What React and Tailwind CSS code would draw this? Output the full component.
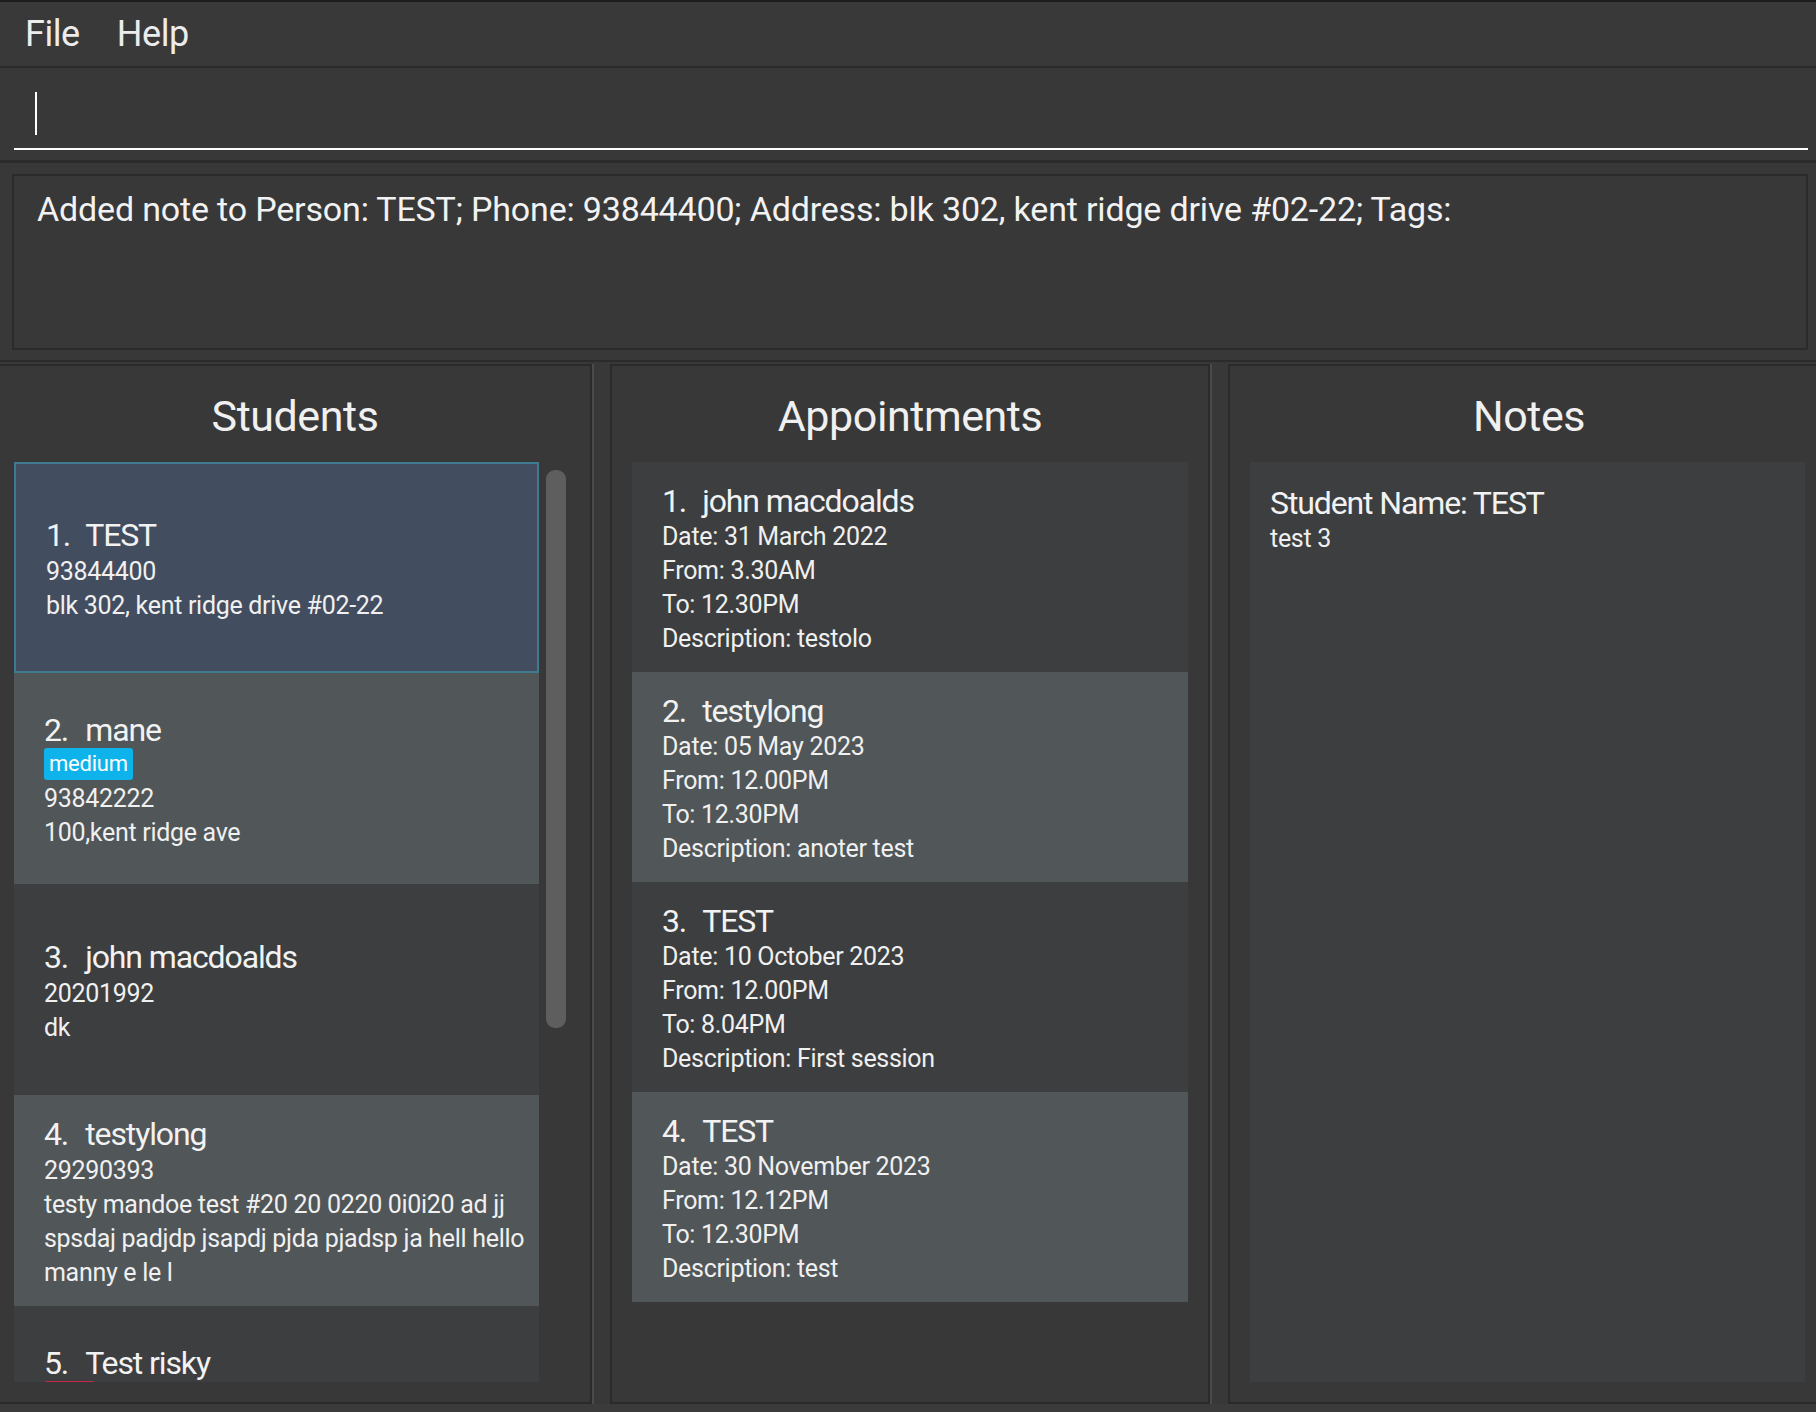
import React from "react";

const students = [
  { n: "1.", name: "TEST", phone: "93844400", addr: ["blk 302, kent ridge drive #02-22"], selected: true },
  { n: "2.", name: "mane", tag: { text: "medium", color: "bg-[#0db3ea]" }, phone: "93842222", addr: ["100,kent ridge ave"] },
  { n: "3.", name: "john macdoalds", phone: "20201992", addr: ["dk"] },
  {
    n: "4.",
    name: "testylong",
    phone: "29290393",
    addr: [
      "testy mandoe test #20 20 0220 0i0i20 ad jj",
      "spsdaj padjdp jsapdj pjda pjadsp ja hell hello",
      "manny e le l",
    ],
  },
  { n: "5.", name: "Test risky", tag: { text: "high", color: "bg-[#c8264a]" }, phone: "91234567", addr: ["risky road"] },
];

const appts = [
  { n: "1.", name: "john macdoalds", date: "31 March 2022", from: "3.30AM", to: "12.30PM", desc: "testolo" },
  { n: "2.", name: "testylong", date: "05 May 2023", from: "12.00PM", to: "12.30PM", desc: "anoter test" },
  { n: "3.", name: "TEST", date: "10 October 2023", from: "12.00PM", to: "8.04PM", desc: "First session" },
  { n: "4.", name: "TEST", date: "30 November 2023", from: "12.12PM", to: "12.30PM", desc: "test" },
];

const small = "text-[25px] leading-[34px] tracking-[-0.012em] text-[#f0f0f0] whitespace-nowrap";
const big = "text-[32px] tracking-[-0.035em] text-[#f2f2f2] whitespace-nowrap";

function StudentCard({ s, i }) {
  const bg = s.selected
    ? "bg-[#424d5f] border-2 border-[#3e7b91] pl-[30px]"
    : i % 2 === 1
    ? "bg-[#515658] pl-[30px]"
    : "bg-[#3c3e3f] pl-[30px]";
  return (
    <div className={`h-[211px] shrink-0 flex flex-col justify-center pt-[2px] ${bg}`}>
      <div className={`${big} leading-[40px]`}>
        <span>{s.n}</span>
        <span className={s.selected ? "ml-[15px]" : "ml-[17px]"}>{s.name}</span>
      </div>
      {s.tag && (
        <div className="h-[34px] -mt-[2px] flex items-start">
          <span className={`${s.tag.color} text-white text-[22px] leading-[32px] tracking-[-0.01em] px-[5px] rounded-[3px]`}>
            {s.tag.text}
          </span>
        </div>
      )}
      <div className={small}>{s.phone}</div>
      {s.addr.map((a, k) => (
        <div key={k} className={small}>
          {a}
        </div>
      ))}
    </div>
  );
}

function ApptCard({ a, i }) {
  const bg = i % 2 === 1 ? "bg-[#515658]" : "bg-[#3c3e3f]";
  return (
    <div className={`h-[210px] shrink-0 pt-[20px] pl-[30px] ${bg}`}>
      <div className={`${big} leading-[38px]`}>
        <span>{a.n}</span>
        <span className="ml-[16px]">{a.name}</span>
      </div>
      <div className={small}>Date: {a.date}</div>
      <div className={small}>From: {a.from}</div>
      <div className={small}>To: {a.to}</div>
      <div className={small}>Description: {a.desc}</div>
    </div>
  );
}

function Header({ children, extra = "" }) {
  return (
    <div className={`h-[96px] shrink-0 text-center text-[43px] leading-[100px] tracking-[-0.01em] text-[#f0f0f0] ${extra}`}>
      {children}
    </div>
  );
}

export default function App() {
  return (
    <div className="w-[1816px] h-[1412px] overflow-hidden bg-[#383838] flex flex-col font-['Roboto',_sans-serif] tracking-[-0.025em] text-white">
      {/* top edge */}
      <div className="h-[2px] shrink-0 bg-[#1c1c1c]" />
      {/* menu bar */}
      <div className="h-[64px] shrink-0 bg-[#393939] flex items-center text-[36px] leading-[64px] tracking-[-0.012em] text-[#ececec]">
        <span className="ml-[25px]">File</span>
        <span className="ml-[37px]">Help</span>
      </div>
      <div className="h-[2px] shrink-0 bg-[#2b2b2b]" />
      {/* command box */}
      <div className="h-[92px] shrink-0 relative">
        <div className="absolute left-[35px] top-[24px] w-[2px] h-[43px] bg-white" />
        <div className="absolute left-[14px] top-[80px] w-[1794px] h-[2px] bg-white" />
      </div>
      <div className="h-[3px] shrink-0 bg-[#2b2b2b]" />
      {/* result box */}
      <div className="h-[197px] shrink-0 pt-[11px] pl-[12px] pr-[8px]">
        <div className="h-[176px] border-2 border-[#2b2b2b] pl-[23px] pt-[13px] text-[34px] leading-[40px] tracking-[-0.005em] text-[#f2f2f2] whitespace-nowrap">
          Added note to Person: TEST; Phone: 93844400; Address: blk 302, kent ridge drive #02-22; Tags:
        </div>
      </div>
      <div className="h-[2px] shrink-0 bg-[#2b2b2b]" />
      <div className="h-[2px] shrink-0" />
      {/* panels */}
      <div className="h-[1040px] shrink-0 flex">
        {/* Students */}
        <div className="w-[592px] shrink-0 border-t-2 border-r-2 border-b-2 border-[#2a2a2a] flex flex-col">
          <Header>Students</Header>
          <div className="flex h-[920px]">
            <div className="ml-[14px] w-[525px] h-[920px] overflow-hidden flex flex-col">
              {students.map((s, i) => (
                <StudentCard key={i} s={s} i={i} />
              ))}
            </div>
            <div className="ml-[7px] mt-[8px] w-[20px] h-[558px] rounded-[9px] bg-[#5e5e5e]" />
          </div>
        </div>
        <div className="w-[2px] shrink-0 bg-[#4a4a4a]" />
        <div className="w-[16px] shrink-0" />
        {/* Appointments */}
        <div className="w-[600px] shrink-0 border-2 border-[#2a2a2a] flex flex-col">
          <Header>Appointments</Header>
          <div className="ml-[20px] w-[556px] flex flex-col">
            {appts.map((a, i) => (
              <ApptCard key={i} a={a} i={i} />
            ))}
          </div>
        </div>
        <div className="w-[2px] shrink-0 bg-[#4a4a4a]" />
        <div className="w-[16px] shrink-0" />
        {/* Notes */}
        <div className="flex-1 border-t-2 border-l-2 border-b-2 border-[#2a2a2a] flex flex-col">
          <Header extra="pl-[12px]">Notes</Header>
          <div className="ml-[20px] w-[555px] h-[920px] bg-[#3c3e3f] pt-[22px] pl-[20px]">
            <div className={`${big} leading-[38px]`}>Student Name: TEST</div>
            <div className={small}>test 3</div>
          </div>
        </div>
      </div>
      <div className="flex-1 bg-[#3b3b3b]" />
    </div>
  );
}
